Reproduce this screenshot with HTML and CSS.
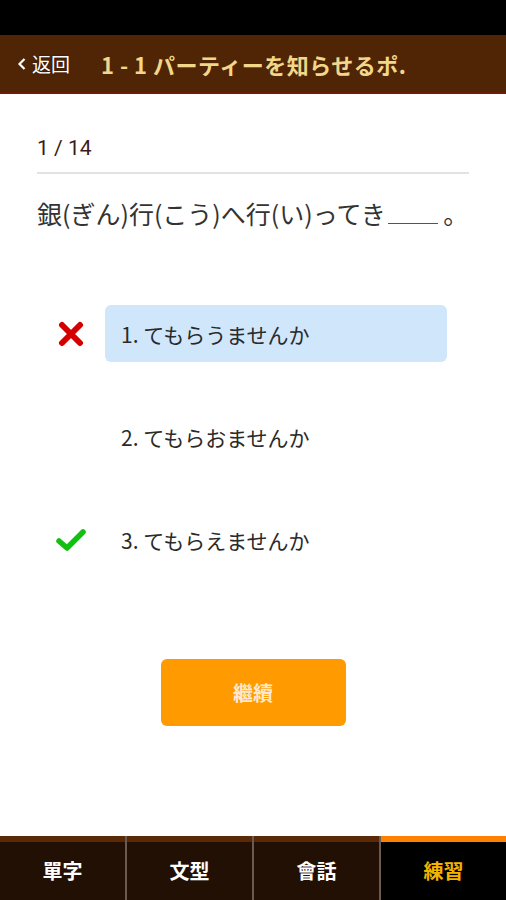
FILE: index.html
```html
<!DOCTYPE html>
<html lang="ja">
<head>
    <meta charset="UTF-8">
    <meta name="viewport" content="width=device-width, initial-scale=1.0">
    <title>練習</title>
    <link rel="stylesheet" href="styles.css">
</head>
<body>

    <div class="status-bar"></div>

    <header class="top-bar">
        <a class="back" href="#">
            <svg width="10" height="14" viewBox="0 0 10 14"><path d="M7.5 2 L2.5 7 L7.5 12" fill="none" stroke="#fff" stroke-width="2.2"/></svg>
            返回
        </a>
        <h1>1 - 1 パーティーを知らせるポ.</h1>
    </header>

    <main class="quiz">
        <div class="counter">1 / 14</div>
        <p class="question">銀(ぎん)行(こう)へ行(い)ってき<span class="blank"></span> 。</p>

        <ul class="options">
            <li class="option">
                <span class="mark">
                    <svg width="26" height="26" viewBox="0 0 26 26"><path d="M4 4 L22 22 M22 4 L4 22" stroke="#d40000" stroke-width="6" stroke-linecap="round"/></svg>
                </span>
                <span class="answer selected">1. てもらうませんか</span>
            </li>
            <li class="option">
                <span class="mark"></span>
                <span class="answer">2. てもらおませんか</span>
            </li>
            <li class="option">
                <span class="mark">
                    <svg width="32" height="26" viewBox="0 0 32 26"><path d="M4 14 L12 21 L28 5" fill="none" stroke="#11c011" stroke-width="5.5" stroke-linecap="round" stroke-linejoin="round"/></svg>
                </span>
                <span class="answer">3. てもらえませんか</span>
            </li>
        </ul>

        <button class="next">繼續</button>
    </main>

    <nav class="tabs">
        <a href="#" class="tab">單字</a>
        <a href="#" class="tab">文型</a>
        <a href="#" class="tab">會話</a>
        <a href="#" class="tab active">練習</a>
    </nav>

</body>
</html>
```

FILE: styles.css
```css
body {
    margin: 0;
    height: 900px;
    display: flex;
    flex-direction: column;
    background: #fff;
    font-family: "Noto Sans CJK JP", "Noto Sans", sans-serif;
    color: #333;
}

.status-bar {
    height: 35px;
    background: #000;
}

.top-bar {
    height: 57px;
    background: #4f2506;
    border-bottom: 2px solid #6e1c08;
    display: flex;
    align-items: center;
    padding-left: 17px;
}

.back {
    display: flex;
    align-items: center;
    gap: 5px;
    color: #fff;
    text-decoration: none;
    font-size: 19px;
    margin-right: 31px;
    text-shadow: 0 0 2px rgba(0, 0, 0, 0.6);
}

.top-bar h1 {
    margin: 0;
    font-size: 22px;
    font-weight: bold;
    color: #f1d78a;
    white-space: nowrap;
    letter-spacing: 0.5px;
}

.quiz {
    flex: 1;
    padding: 0 37px;
}

.counter {
    margin-top: 41px;
    font-family: Roboto, "Noto Sans", sans-serif;
    font-size: 21px;
    line-height: 26px;
    color: #3b1c1c;
    padding-bottom: 11px;
    border-bottom: 2px solid #e2e2e2;
}

.question {
    margin: 21px 0 0;
    font-size: 25px;
    line-height: 36px;
    color: #333;
}

.blank {
    display: inline-block;
    width: 50px;
    border-bottom: 1px solid #555;
    margin-left: 2px;
}

.options {
    list-style: none;
    margin: 74px 0 0;
    padding: 0;
    display: flex;
    flex-direction: column;
    gap: 46px;
}

.option {
    display: flex;
    align-items: center;
    height: 57px;
}

.mark {
    width: 68px;
    display: flex;
    justify-content: center;
}

.answer {
    width: 326px;
    height: 57px;
    padding-left: 16px;
    display: flex;
    align-items: center;
    font-size: 21px;
    color: #2a2a2a;
    border-radius: 6px;
}

.answer.selected {
    background: #d0e6fb;
}

.next {
    display: block;
    margin: 91px auto 0;
    width: 185px;
    height: 67px;
    background: #ff9a00;
    border: none;
    border-radius: 6px;
    color: #ffe9d0;
    font-family: inherit;
    font-size: 20px;
    font-weight: bold;
}

.tabs {
    height: 64px;
    display: flex;
    background: #6b5a50;
    gap: 2px;
}

.tab {
    flex: 1;
    background: #221005;
    border-top: 6px solid #5a2a08;
    display: flex;
    align-items: center;
    justify-content: center;
    color: #fff;
    text-decoration: none;
    font-size: 20px;
    font-weight: bold;
    padding-bottom: 2px;
}

.tab.active {
    background: #000;
    border-top-color: #ff7f00;
    color: #f2b400;
}
```
